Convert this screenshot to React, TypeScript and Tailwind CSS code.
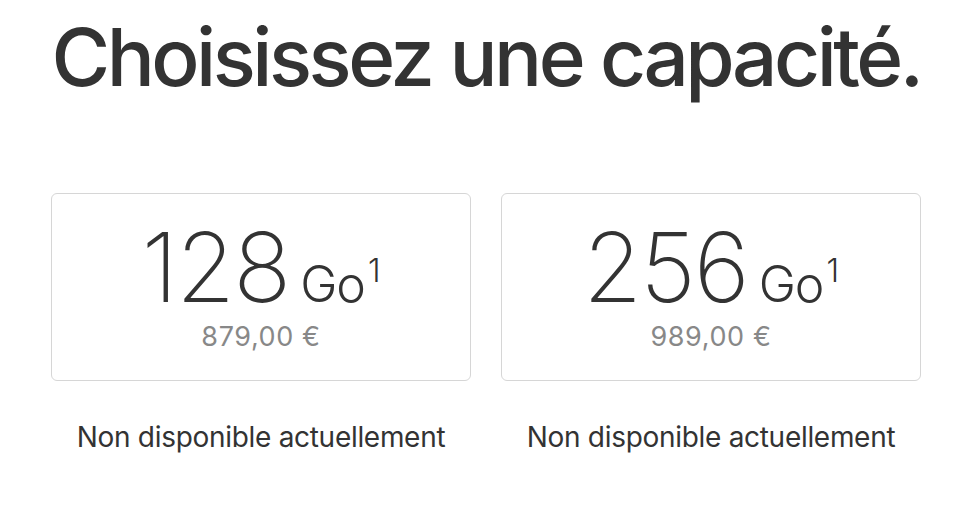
const options = [
  { size: "128", price: "879,00 €" },
  { size: "256", price: "989,00 €" },
];

export default function App() {
  return (
    <div className="w-[980px] h-[506px] bg-white overflow-hidden font-['Inter',sans-serif] text-[#333]">
      <div className="ml-[51px] w-[870px]">
        <h1 className="pt-[7px] text-center whitespace-nowrap text-[80px] leading-[100px] font-medium tracking-[-3.5px]">
          Choisissez une capacité.
        </h1>
        <div className="mt-[86px] grid grid-cols-2 gap-[30px]">
          {options.map((o) => (
            <div key={o.size} className="flex flex-col items-center">
              <div className="w-full h-[188px] rounded-[6px] border border-[#d6d6d6] flex flex-col items-center pt-[25px]">
                <div className="flex items-baseline">
                  <span className="text-[96px] leading-[96px] font-extralight tracking-[-2px]">
                    {o.size}
                  </span>
                  <span className="ml-[11px] text-[50px] leading-[50px] font-light tracking-[-1px]">
                    Go
                  </span>
                  <span className="ml-[3px] relative -top-[20px] text-[32px] leading-[32px] font-light">
                    1
                  </span>
                </div>
                <div className="mt-[7px] text-[27px] leading-[30px] text-[#888] tracking-[0.6px]">
                  {o.price}
                </div>
              </div>
              <div className="mt-[41px] text-[28px] leading-[30px] text-[#333] tracking-[-0.3px]">
                Non disponible actuellement
              </div>
            </div>
          ))}
        </div>
      </div>
    </div>
  );
}
